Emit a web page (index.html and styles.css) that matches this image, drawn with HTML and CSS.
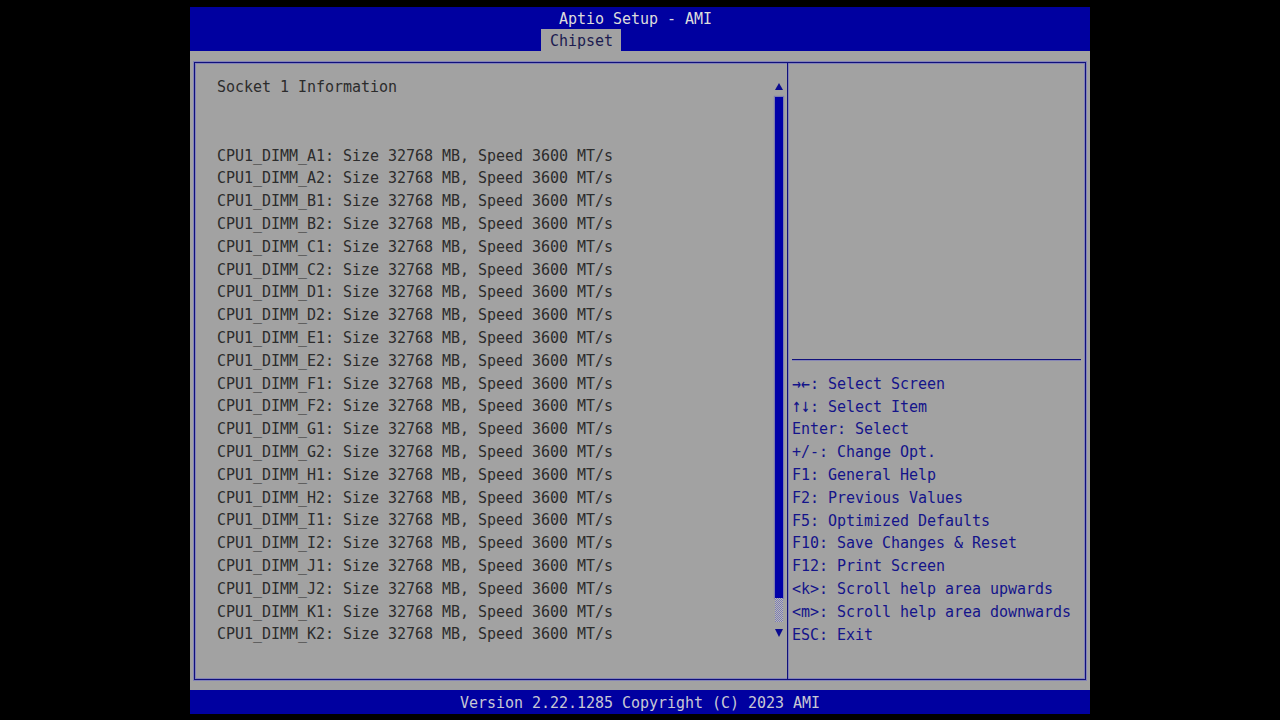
FILE: index.html
```html
<!DOCTYPE html>
<html lang="en">
<head>
<meta charset="utf-8">
<title>Aptio Setup - AMI</title>
<link rel="stylesheet" href="styles.css">
</head>
<body>
<div class="screen">
  <header class="top">
    <div class="title">Aptio Setup - AMI</div>
    <div class="tabs"><span class="tab">Chipset</span></div>
  </header>
  <main class="body">
    <div class="frame">
      <section class="left">
        <div class="list">
          <div class="row">Socket 1 Information</div>
          <div class="row"></div>
          <div class="row"></div>
          <div class="row">CPU1_DIMM_A1: Size 32768 MB, Speed 3600 MT/s</div>
          <div class="row">CPU1_DIMM_A2: Size 32768 MB, Speed 3600 MT/s</div>
          <div class="row">CPU1_DIMM_B1: Size 32768 MB, Speed 3600 MT/s</div>
          <div class="row">CPU1_DIMM_B2: Size 32768 MB, Speed 3600 MT/s</div>
          <div class="row">CPU1_DIMM_C1: Size 32768 MB, Speed 3600 MT/s</div>
          <div class="row">CPU1_DIMM_C2: Size 32768 MB, Speed 3600 MT/s</div>
          <div class="row">CPU1_DIMM_D1: Size 32768 MB, Speed 3600 MT/s</div>
          <div class="row">CPU1_DIMM_D2: Size 32768 MB, Speed 3600 MT/s</div>
          <div class="row">CPU1_DIMM_E1: Size 32768 MB, Speed 3600 MT/s</div>
          <div class="row">CPU1_DIMM_E2: Size 32768 MB, Speed 3600 MT/s</div>
          <div class="row">CPU1_DIMM_F1: Size 32768 MB, Speed 3600 MT/s</div>
          <div class="row">CPU1_DIMM_F2: Size 32768 MB, Speed 3600 MT/s</div>
          <div class="row">CPU1_DIMM_G1: Size 32768 MB, Speed 3600 MT/s</div>
          <div class="row">CPU1_DIMM_G2: Size 32768 MB, Speed 3600 MT/s</div>
          <div class="row">CPU1_DIMM_H1: Size 32768 MB, Speed 3600 MT/s</div>
          <div class="row">CPU1_DIMM_H2: Size 32768 MB, Speed 3600 MT/s</div>
          <div class="row">CPU1_DIMM_I1: Size 32768 MB, Speed 3600 MT/s</div>
          <div class="row">CPU1_DIMM_I2: Size 32768 MB, Speed 3600 MT/s</div>
          <div class="row">CPU1_DIMM_J1: Size 32768 MB, Speed 3600 MT/s</div>
          <div class="row">CPU1_DIMM_J2: Size 32768 MB, Speed 3600 MT/s</div>
          <div class="row">CPU1_DIMM_K1: Size 32768 MB, Speed 3600 MT/s</div>
          <div class="row">CPU1_DIMM_K2: Size 32768 MB, Speed 3600 MT/s</div>
        </div>
        <div class="scroll">
          <div class="arrow-up"></div>
          <div class="thumb"></div>
          <div class="hatch"></div>
          <div class="arrow-down"></div>
        </div>
      </section>
      <aside class="right">
        <div class="help-desc"></div>
        <div class="keys">
          <div class="row"><span class="arr">→</span><span class="arr">←</span>: Select Screen</div>
          <div class="row"><span class="arr">↑</span><span class="arr">↓</span>: Select Item</div>
          <div class="row">Enter: Select</div>
          <div class="row">+/-: Change Opt.</div>
          <div class="row">F1: General Help</div>
          <div class="row">F2: Previous Values</div>
          <div class="row">F5: Optimized Defaults</div>
          <div class="row">F10: Save Changes &amp; Reset</div>
          <div class="row">F12: Print Screen</div>
          <div class="row">&lt;k&gt;: Scroll help area upwards</div>
          <div class="row">&lt;m&gt;: Scroll help area downwards</div>
          <div class="row">ESC: Exit</div>
        </div>
      </aside>
    </div>
  </main>
  <footer class="bottom">Version 2.22.1285 Copyright (C) 2023 AMI</footer>
</div>
</body>
</html>
```
FILE: styles.css
```css
html, body {
  margin: 0;
  padding: 0;
  background: #000;
}

body {
  font-family: "DejaVu Sans Mono", "Liberation Mono", monospace;
  font-size: 15px;
  letter-spacing: -0.03px;
  width: 1280px;
  height: 720px;
  overflow: hidden;
}

.screen {
  width: 900px;
  margin: 7px 0 0 190px;
}

.top {
  background: #0000a0;
  height: 44px;
}

.title {
  height: 22px;
  line-height: 24px;
  padding-left: 369px;
  color: #dcdcdc;
  white-space: pre;
}

.tabs {
  height: 22px;
  padding-left: 351px;
}

.tab {
  display: inline-block;
  height: 22px;
  line-height: 25px;
  padding: 0 8px 0 9px;
  background: #a2a2a2;
  color: #1c1c50;
}

.body {
  background: #a2a2a2;
  height: 639px;
  box-sizing: border-box;
  padding: 11px 4px 10px;
}

.frame {
  height: 618px;
  box-sizing: border-box;
  border: 1px solid #10107a;
  box-shadow: 0 0 0 1px rgba(90, 90, 210, 0.45), inset 0 0 0 1px rgba(90, 90, 210, 0.45);
  display: flex;
}

.left {
  width: 593px;
  display: flex;
  align-items: flex-start;
  padding-right: 4px;
  box-sizing: border-box;
  border-right: 1px solid #10107a;
  box-shadow: 1px 0 0 rgba(90, 90, 210, 0.45);
}

.list {
  flex: 1;
  padding: 13.2px 0 0 22px;
  color: #2c2c2c;
}

.row {
  height: 22.8px;
  line-height: 22.8px;
  white-space: pre;
}

.scroll {
  width: 8px;
  padding-top: 20px;
  display: flex;
  flex-direction: column;
  align-items: center;
}

.arrow-up {
  width: 0;
  height: 0;
  border-left: 4px solid transparent;
  border-right: 4px solid transparent;
  border-bottom: 7px solid #0a0a90;
}

.thumb {
  margin-top: 7px;
  width: 8px;
  height: 501px;
  background: #0000a8;
  box-shadow: 0 0 1px 1px rgba(60, 60, 200, 0.35);
}

.hatch {
  width: 8px;
  height: 24px;
  background: repeating-conic-gradient(#7a7ab4 0 25%, #b8b8b8 0 50%) 0 0 / 2px 2px;
}

.arrow-down {
  margin-top: 7px;
  width: 0;
  height: 0;
  border-left: 4px solid transparent;
  border-right: 4px solid transparent;
  border-top: 8px solid #0a0a90;
}

.right {
  flex: 1;
  padding: 0 4px;
  color: #14148a;
}

.help-desc {
  height: 296px;
  border-bottom: 1px solid #10107a;
  box-shadow: 0 1px 0 rgba(90, 90, 210, 0.4);
}

.keys {
  padding-top: 12.8px;
}

.arr {
  display: inline-block;
  font-family: "DejaVu Sans", sans-serif;
  font-weight: bold;
  font-size: 14px;
  letter-spacing: 0;
  vertical-align: top;
  transform: scaleX(0.767);
  transform-origin: 0 50%;
  margin-right: -2.73px;
}

.bottom {
  background: #0000a0;
  height: 24px;
  line-height: 26px;
  text-align: center;
  color: #c8c8d4;
  white-space: pre;
}
```
